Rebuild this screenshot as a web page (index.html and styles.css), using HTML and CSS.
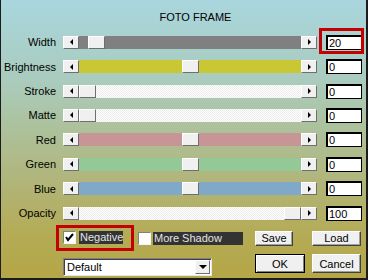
FILE: index.html
```html
<!DOCTYPE html>
<html lang="en">
<head>
    <meta charset="UTF-8">
    <title>Foto Frame</title>
    <link rel="stylesheet" href="styles.css">
</head>
<body>
<div class="dialog">
    <div class="title">FOTO FRAME</div>

    <div class="rows">
        <div class="row">
            <span class="label">Width</span>
            <div class="slider gray">
                <span class="arrow left"></span>
                <div class="track"><span class="thumb" style="margin-left: 9px"></span></div>
                <span class="arrow right"></span>
            </div>
            <div class="value">20<span class="mark"></span></div>
        </div>
        <div class="row">
            <span class="label">Brightness</span>
            <div class="slider yellow">
                <span class="arrow left"></span>
                <div class="track"><span class="thumb" style="margin-left: 103px"></span></div>
                <span class="arrow right"></span>
            </div>
            <div class="value">0</div>
        </div>
        <div class="row">
            <span class="label">Stroke</span>
            <div class="slider dots">
                <span class="arrow left"></span>
                <div class="track"><span class="thumb" style="margin-left: 0"></span></div>
                <span class="arrow right"></span>
            </div>
            <div class="value">0</div>
        </div>
        <div class="row">
            <span class="label">Matte</span>
            <div class="slider dots">
                <span class="arrow left"></span>
                <div class="track"><span class="thumb" style="margin-left: 0"></span></div>
                <span class="arrow right"></span>
            </div>
            <div class="value">0</div>
        </div>
        <div class="row">
            <span class="label">Red</span>
            <div class="slider red">
                <span class="arrow left"></span>
                <div class="track"><span class="thumb" style="margin-left: 103px"></span></div>
                <span class="arrow right"></span>
            </div>
            <div class="value">0</div>
        </div>
        <div class="row">
            <span class="label">Green</span>
            <div class="slider green">
                <span class="arrow left"></span>
                <div class="track"><span class="thumb" style="margin-left: 103px"></span></div>
                <span class="arrow right"></span>
            </div>
            <div class="value">0</div>
        </div>
        <div class="row">
            <span class="label">Blue</span>
            <div class="slider blue">
                <span class="arrow left"></span>
                <div class="track"><span class="thumb" style="margin-left: 103px"></span></div>
                <span class="arrow right"></span>
            </div>
            <div class="value">0</div>
        </div>
        <div class="row">
            <span class="label">Opacity</span>
            <div class="slider dots">
                <span class="arrow left"></span>
                <div class="track"><span class="thumb" style="margin-left: 205px"></span></div>
                <span class="arrow right"></span>
            </div>
            <div class="value">100</div>
        </div>
    </div>

    <div class="opts">
        <div class="check marked">
            <span class="box">
                <svg width="11" height="11" viewBox="0 0 11 11"><path d="M2 5 L4 8 L9 2" fill="none" stroke="#000" stroke-width="2"/></svg>
            </span>
            <span class="cap">Negative</span>
        </div>
        <div class="check">
            <span class="box"></span>
            <span class="cap wide">More Shadow</span>
        </div>
        <span class="button save">Save</span>
        <span class="button load">Load</span>
    </div>

    <div class="acts">
        <div class="combo">
            <span class="combo-text">Default</span>
            <span class="combo-btn"></span>
        </div>
        <span class="button ok">OK</span>
        <span class="button cancel">Cancel</span>
    </div>
</div>
</body>
</html>
```

FILE: styles.css
```css
* {
    margin: 0;
    padding: 0;
    box-sizing: border-box;
}

body {
    font: 11px "Liberation Sans", Arial, sans-serif;
    color: #000;
}

.dialog {
    width: 368px;
    height: 280px;
    border-left: 1px solid #1c1c1c;
    border-right: 2px solid #1c1c1c;
    border-bottom: 2px solid #1c1c1c;
    background: linear-gradient(to bottom, #a9d6de 0%, #aacbbc 30%, #acc29e 45%, #b1b57a 65%, #b4ab55 85%, #b5a647 100%);
}

.title {
    height: 30px;
    padding: 11px 0 0 24px;
    line-height: 13px;
    text-align: center;
}

.row {
    display: flex;
    align-items: center;
    height: 24.43px;
}

.label {
    width: 55px;
    text-align: right;
}

.slider {
    display: flex;
    width: 254px;
    height: 13px;
    margin-left: 7px;
}

.arrow,
.thumb {
    display: flex;
    align-items: center;
    justify-content: center;
    height: 13px;
    background: #f0f0f0;
    border: 1px solid;
    border-color: #fff #6e6e6e #6e6e6e #fff;
}

.arrow {
    width: 16px;
}

.arrow::before {
    content: "";
    border-top: 3px solid transparent;
    border-bottom: 3px solid transparent;
}

.arrow.left::before {
    border-right: 3px solid #000;
}

.arrow.right::before {
    border-left: 3px solid #000;
}

.thumb {
    width: 17px;
}

.track {
    flex: 1;
    display: flex;
}

.gray .track { background: #808080; }
.yellow .track { background: #c9c834; }
.red .track { background: #c89597; }
.green .track { background: #94c896; }
.blue .track { background: #80a8c8; }

.dots .track {
    background: repeating-conic-gradient(#fff 0 25%, #ececec 0 50%) 0 0 / 2px 2px;
}

.value {
    position: relative;
    width: 36px;
    height: 15px;
    margin-left: 9px;
    padding-left: 1px;
    line-height: 12px;
    background: #fff;
    border-style: solid;
    border-color: #000;
    border-width: 2px 1px 1px 2px;
}

.mark {
    position: absolute;
    left: -9px;
    top: -9px;
    width: 45px;
    height: 26px;
    border: 3px solid #c40000;
}

.opts {
    display: flex;
    align-items: center;
    height: 26px;
    padding-left: 55px;
}

.check {
    display: flex;
    align-items: center;
}

.check.marked {
    border: 3px solid #c40000;
    padding: 3px 8px 4px 4px;
}

.check + .check {
    margin-left: 4px;
}

.box {
    display: flex;
    align-items: center;
    justify-content: center;
    width: 13px;
    height: 13px;
    background: #fff;
    border: 1px solid;
    border-color: #808080 #f4f4f4 #f4f4f4 #808080;
}

.cap {
    width: 44px;
    height: 13px;
    margin-left: 3px;
    padding-left: 1px;
    line-height: 13px;
    background: #333;
    color: #e4e4e4;
}

.cap.wide {
    width: 90px;
    margin-left: 2px;
}

.button {
    display: flex;
    align-items: center;
    justify-content: center;
    height: 15px;
    background: #f0f0f0;
    border: 1px solid;
    border-color: #fff #404040 #404040 #fff;
    box-shadow: inset -1px -1px 0 #a0a0a0;
}

.save {
    width: 38px;
    margin-left: 12px;
}

.load {
    width: 49px;
    margin-left: 19px;
}

.acts {
    display: flex;
    align-items: flex-start;
    margin-top: 3px;
    padding-left: 62px;
}

.combo {
    display: flex;
    align-items: center;
    justify-content: space-between;
    width: 149px;
    height: 18px;
    margin-top: 4px;
    padding: 0 1px 0 3px;
    background: #fff;
    border: 1px solid;
    border-color: #808080 #e8e8e8 #e8e8e8 #808080;
    box-shadow: inset 1px 1px 0 #404040;
}

.combo-btn {
    display: flex;
    align-items: center;
    justify-content: center;
    width: 15px;
    height: 14px;
    background: #f0f0f0;
    border: 1px solid;
    border-color: #fff #6e6e6e #6e6e6e #fff;
}

.combo-btn::before {
    content: "";
    border-left: 4px solid transparent;
    border-right: 4px solid transparent;
    border-top: 4px solid #000;
}

.ok {
    width: 50px;
    height: 19px;
    margin-left: 43px;
    border-color: #000;
    box-shadow: inset 1px 1px 0 #fff, inset -1px -1px 0 #808080;
}

.cancel {
    width: 49px;
    height: 19px;
    margin-left: 7px;
}
```
